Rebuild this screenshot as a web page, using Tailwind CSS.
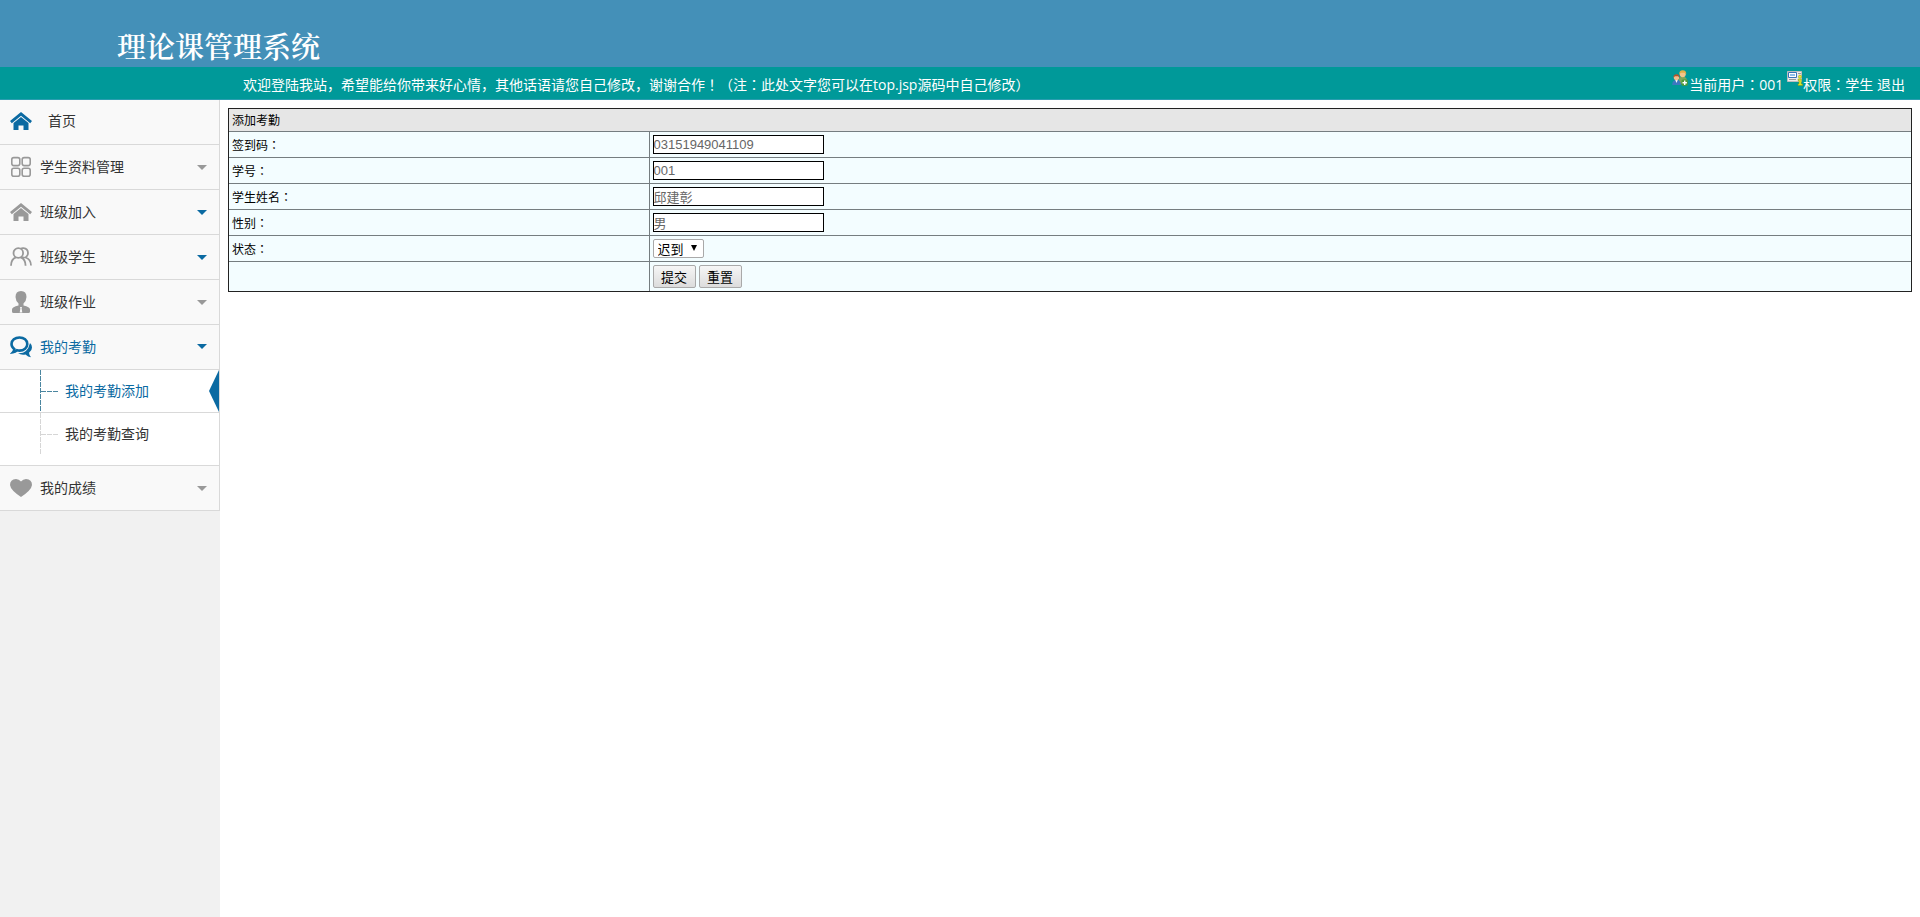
<!DOCTYPE html>
<html lang="zh-CN">
<head>
<meta charset="utf-8">
<title>理论课管理系统</title>
<script src="https://cdn.jsdelivr.net/npm/@tailwindcss/browser@4"></script>
</head>
<body class="min-h-screen flex flex-col bg-white text-black font-['Open_Sans','Noto_Sans_CJK_SC',sans-serif]">
<svg class="hidden" aria-hidden="true">
  <symbol id="home" viewBox="0 0 22 18"><path d="M11 0 22 9 20.200 11.200 11 3.700 1.800 11.200 0 9z"/><path d="M11 5 18.500 11V18H13.500V13.500H8.500V18H3.500V11z"/></symbol>
  <symbol id="caret" viewBox="0 0 10 5"><path d="M0 0H10L5 5z"/></symbol>
</svg>
<header>
  <div class="h-[67px] bg-[#4490b8] pl-[117px] pt-[26px]">
    <h1 class="text-[29px] leading-10 font-semibold text-white font-['Noto_Serif_CJK_SC','Noto_Sans_CJK_SC',serif]">理论课管理系统</h1>
  </div>
  <div class="h-[33px] bg-[#009999] border-b border-[#2a9db0] flex items-center justify-between pl-[243px] pr-[15px] pt-[2px] text-sm leading-5 text-white">
    <p>欢迎登陆我站，希望能给你带来好心情，其他话语请您自己修改，谢谢合作<span lang="ja" class="font-['Noto_Sans_CJK_JP',sans-serif]">！</span>（注<span lang="ja" class="font-['Noto_Sans_CJK_JP',sans-serif]">：</span>此处文字您可以在top.jsp源码中自己修改）</p>
    <div class="flex whitespace-nowrap">
      <svg class="size-4 -mt-1" viewBox="0 0 16 16" aria-hidden="true">
        <path d="M7 14V9Q7.500 6.500 10.700 6.500 14.300 6.500 15 10v4z" fill="#7fa65a"/><circle cx="10.700" cy="4.200" r="3" fill="#f5c58a"/><path d="M7.300 4.200Q7 .4 10.700.2 14.500.4 14.200 4.200L12.500 2.800H9z" fill="#e2b04a"/>
        <path d="M.2 15Q.2 10 4.500 10 9 10 9 15z" fill="#3c78c0"/><path d="M3.300 10h2.400L4.500 13z" fill="#fff"/><circle cx="4.500" cy="7.500" r="2.700" fill="#f2bd8d"/><path d="M1.400 7.700Q1.200 4.200 4.500 4.200 7.800 4.200 7.600 7.700L6 6.300H3z" fill="#b0532b"/>
        <rect x="9.500" y="9.500" width="6.300" height="6.300" rx="1.500" fill="#4c9a3a"/><path d="M12 10.500h1.400v1.500h1.500v1.400h-1.500v1.500H12v-1.500h-1.500V12H12z" fill="#fff"/>
      </svg>
      <span class="mr-1 pl-px">当前用户<span lang="ja" class="font-['Noto_Sans_CJK_JP',sans-serif]">：</span>001</span>
      <svg class="size-4 -mt-1" viewBox="0 0 16 16" aria-hidden="true">
        <path d="M.5 1.500h14v10H.5z" fill="#ececec" stroke="#bcbcbc"/><path d="M1.500 2.500h8v5h-8z" fill="#fff" stroke="#3974b8"/><path d="M3 4h5v2H3z" fill="#8fc0eb"/>
        <path d="M11 3.500h3M2 9.500h7" stroke="#9a9a9a"/><circle cx="13" cy="6.700" r="1.600" fill="#e9e836" stroke="#8a9c12" stroke-width=".5"/><path d="M11 9h3.300v5H15.500v1.500h-4.500V14h1v-3.500h-1z" fill="#dde52a" stroke="#7d9a12" stroke-width=".5"/>
      </svg>
      <span>权限<span lang="ja" class="font-['Noto_Sans_CJK_JP',sans-serif]">：</span>学生 <a href="#">退出</a></span>
    </div>
  </div>
</header>
<div class="flex flex-1">
  <nav class="w-[220px] shrink-0 bg-[#f1f1f1] text-sm leading-5 text-[#333]">
    <ul class="border-r border-[#d9d9d9] bg-[#f9f9f9]">
      <li class="border-b border-[#d9d9d9]"><a href="#" class="flex h-11 items-center pb-[2px] pl-[10px]"><svg class="w-[22px] h-[18px] mr-4 fill-[#0b6aa2]" aria-hidden="true"><use href="#home"/></svg>首页</a></li>
      <li class="border-b border-[#d9d9d9]"><a href="#" class="flex h-11 items-center pl-[10px] pr-3"><svg class="size-[22px] mr-2" viewBox="0 0 22 22" fill="none" stroke="#999" stroke-width="1.600" aria-hidden="true"><rect x="1.800" y="1.600" width="8" height="8" rx="2"/><rect x="12.200" y="1.600" width="8" height="8" rx="2"/><rect x="1.800" y="12.200" width="8" height="8" rx="2"/><rect x="12.200" y="12.200" width="8" height="8" rx="2"/></svg><span class="flex-1">学生资料管理</span><svg class="w-[10px] h-[5px] fill-[#999]" aria-hidden="true"><use href="#caret"/></svg></a></li>
      <li class="border-b border-[#d9d9d9]"><a href="#" class="flex h-11 items-center pl-[10px] pr-3"><svg class="w-[22px] h-[18px] mr-2 fill-[#999]" aria-hidden="true"><use href="#home"/></svg><span class="flex-1">班级加入</span><svg class="w-[10px] h-[5px] fill-[#0b6aa2]" aria-hidden="true"><use href="#caret"/></svg></a></li>
      <li class="border-b border-[#d9d9d9]"><a href="#" class="flex h-11 items-center pl-[10px] pr-3"><svg class="size-[22px] mr-2" viewBox="0 0 22 22" fill="none" stroke="#999" stroke-width="1.800" aria-hidden="true"><circle cx="8.300" cy="7" r="4.800"/><path d="M1 19.800Q1 13 6 11.300M10.600 11.300Q15.600 13 15.600 19.800M10.500 2.700Q12 2 13.500 2.200 18 2.800 18 7 18 9.800 15.500 11.500 20.800 13 21 19.500M14.500 11.700 11.800 11.300"/></svg><span class="flex-1">班级学生</span><svg class="w-[10px] h-[5px] fill-[#0b6aa2]" aria-hidden="true"><use href="#caret"/></svg></a></li>
      <li class="border-b border-[#d9d9d9]"><a href="#" class="flex h-11 items-center pl-[10px] pr-3"><svg class="size-[22px] mr-2" viewBox="0 0 22 22" fill="#999" aria-hidden="true"><path d="M11 0Q16.500 0 16.500 6 16.200 10.500 13.500 12.500V14.500Q20 16 20 18.500V20.500Q20 22 18.500 22H3.500Q2 22 2 20.500V18.500Q2 16 8.500 14.500V12.500Q5.800 10.500 5.500 6 5.500 0 11 0z"/><path d="M10 16h2l-.4 1.500.7 4H9.700l.7-4z" fill="#f9f9f9"/></svg><span class="flex-1">班级作业</span><svg class="w-[10px] h-[5px] fill-[#999]" aria-hidden="true"><use href="#caret"/></svg></a></li>
      <li>
        <a href="#" class="flex h-[45px] border-b border-[#d9d9d9] items-center pb-px pl-[10px] pr-3 text-[#0b6aa2]"><svg class="size-[22px] mr-2" viewBox="0 0 22 22" aria-hidden="true"><path d="M9.500 1.500C14 1.500 17.300 4.200 17.300 8S14 14.600 9.500 14.600q-1.400 0-2.500-.3-1.800 1.700-4 2 1.300-1.500 1.300-3.300Q1.500 11 1.500 8C1.500 4.200 5 1.500 9.500 1.500z" fill="none" stroke="#0b6aa2" stroke-width="2.600"/><path d="M20 7Q22 8.500 22 11.500 22 14.800 19 16.800 19.200 19.500 21 21.300 18 21 15.500 18.500 11 19.300 8 17.300 17.500 18 20 7z" fill="#0b6aa2"/></svg><span class="flex-1">我的考勤</span><svg class="w-[10px] h-[5px] fill-[#0b6aa2]" aria-hidden="true"><use href="#caret"/></svg></a>
        <ul class="bg-white pb-[10px] border-b border-[#d9d9d9]">
          <li class="border-b border-[#d9d9d9]"><a href="#" class="flex h-[42px] items-center text-[#0b6aa2]"><svg class="w-[18px] h-[42px] ml-10 mr-[7px]" viewBox="0 0 18 42" fill="none" stroke="#4b86a0" aria-hidden="true"><path d="M.5 0V42" stroke-dasharray="5 1"/><path d="M1 21.500H18" stroke-dasharray="5 1"/></svg><span class="flex-1">我的考勤添加</span><svg class="w-[10px] h-[42px]" viewBox="0 0 10 42" aria-hidden="true"><path d="M10 0V42L0 21z" fill="#0b6aa2"/></svg></a></li>
          <li><a href="#" class="flex h-[42px] items-center"><svg class="w-[18px] h-[42px] ml-10 mr-[7px]" viewBox="0 0 18 42" fill="none" stroke="#d6d6d6" aria-hidden="true"><path d="M.5 0V42" stroke-dasharray="5 1"/><path d="M1 21.500H18" stroke-dasharray="5 1"/></svg>我的考勤查询</a></li>
        </ul>
      </li>
      <li class="border-b border-[#d9d9d9]"><a href="#" class="flex h-11 items-center pl-[10px] pr-3"><svg class="w-[22px] h-[18px] mr-2" viewBox="0 0 22 18" aria-hidden="true"><path d="M11 2.500Q13 0 16 0 22 .3 22 6 21.500 11 11 18 .5 11 0 6 0 .3 6 0 9 0 11 2.500z" fill="#999"/></svg><span class="flex-1">我的成绩</span><svg class="w-[10px] h-[5px] fill-[#999]" aria-hidden="true"><use href="#caret"/></svg></a></li>
    </ul>
  </nav>
  <main class="flex-1 p-2">
    <form>
      <table class="w-full table-fixed border-separate border-spacing-0 border border-[#222] bg-[#f3fdff] text-xs leading-4">
        <colgroup><col class="w-1/4"><col></colgroup>
        <tbody>
        <tr><th colspan="2" class="h-[23px] border-b border-[#757d80] bg-[#e6e6e6] px-[3px] pt-[2px] text-left font-normal">添加考勤</th></tr>
        <tr><td class="h-[26px] border-b border-r border-[#757d80] px-[3px] pt-px"><label for="code">签到码<span lang="ja" class="font-['Noto_Sans_CJK_JP',sans-serif]">：</span></label></td><td class="border-b border-[#757d80] px-[3px]"><input id="code" value="03151949041109" class="block h-[19px] w-[171px] border border-black bg-white text-[13px] leading-4 text-[#666] font-['Liberation_Sans','Noto_Sans_CJK_SC',sans-serif]"></td></tr>
        <tr><td class="h-[26px] border-b border-r border-[#757d80] px-[3px] pt-px"><label for="num">学号<span lang="ja" class="font-['Noto_Sans_CJK_JP',sans-serif]">：</span></label></td><td class="border-b border-[#757d80] px-[3px]"><input id="num" value="001" class="block h-[19px] w-[171px] border border-black bg-white text-[13px] leading-4 text-[#666] font-['Liberation_Sans','Noto_Sans_CJK_SC',sans-serif]"></td></tr>
        <tr><td class="h-[26px] border-b border-r border-[#757d80] px-[3px] pt-px"><label for="name">学生姓名<span lang="ja" class="font-['Noto_Sans_CJK_JP',sans-serif]">：</span></label></td><td class="border-b border-[#757d80] px-[3px]"><input id="name" value="邱建彰" class="block h-[19px] w-[171px] border border-black bg-white pb-px text-[13px] leading-4 text-[#666] font-['Liberation_Sans','Noto_Sans_CJK_SC',sans-serif]"></td></tr>
        <tr><td class="h-[26px] border-b border-r border-[#757d80] px-[3px] pt-px"><label for="sex">性别<span lang="ja" class="font-['Noto_Sans_CJK_JP',sans-serif]">：</span></label></td><td class="border-b border-[#757d80] px-[3px]"><input id="sex" value="男" class="block h-[19px] w-[171px] border border-black bg-white pb-px text-[13px] leading-4 text-[#666] font-['Liberation_Sans','Noto_Sans_CJK_SC',sans-serif]"></td></tr>
        <tr><td class="h-[26px] border-b border-r border-[#757d80] px-[3px] pt-px"><label for="state">状态<span lang="ja" class="font-['Noto_Sans_CJK_JP',sans-serif]">：</span></label></td><td class="border-b border-[#757d80] px-[3px]"><div class="relative w-[51px]"><select id="state" class="block h-[19px] w-full appearance-none rounded-xs border border-[#a9a9a9] bg-white pl-1 text-[13px] leading-4"><option>迟到</option></select><svg class="pointer-events-none absolute right-[7px] top-[6px] w-[6px] h-[6px]" viewBox="0 0 6 6" aria-hidden="true"><path d="M0 0H6L3 6z"/></svg></div></td></tr>
        <tr><td class="h-[29px] border-r border-[#757d80] px-[3px]"></td><td class="px-[3px]"><div class="flex gap-[3px]"><button type="submit" class="h-[23px] w-[43px] rounded-xs border border-[#a9a9a9] bg-linear-to-b from-[#f6f6f6] to-[#dcdcdc] text-[13px] leading-4">提交</button><button type="reset" class="h-[23px] w-[43px] rounded-xs border border-[#a9a9a9] bg-linear-to-b from-[#f6f6f6] to-[#dcdcdc] text-[13px] leading-4">重置</button></div></td></tr>
        </tbody>
      </table>
    </form>
  </main>
</div>
</body>
</html>
